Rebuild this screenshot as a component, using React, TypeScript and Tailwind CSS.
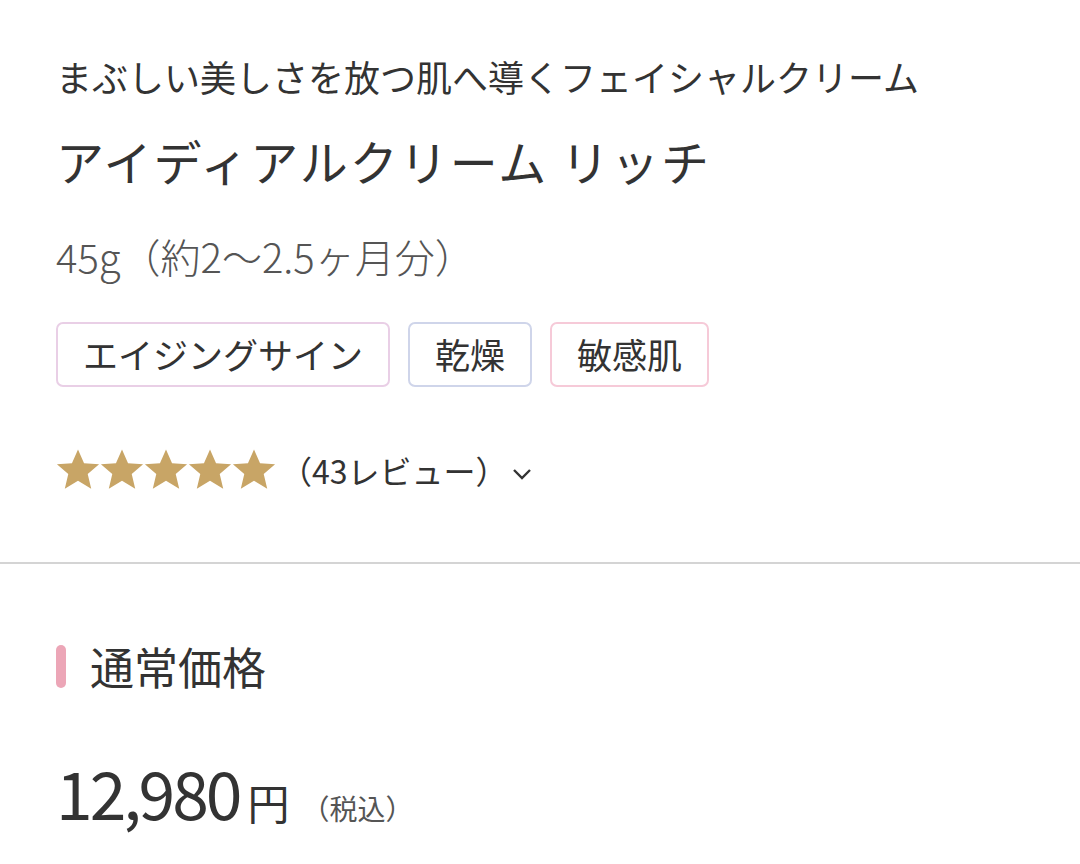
const FONT = { fontFamily: '"Noto Sans CJK JP", "Noto Sans", sans-serif' };

const tags = [
  { label: 'エイジングサイン', border: 'border-[#e9cfe6]' },
  { label: '乾燥', border: 'border-[#cfd5ea]' },
  { label: '敏感肌', border: 'border-[#f6cad8]' },
];

function Star() {
  return (
    <svg viewBox="0 0 24 24" className="w-[44px] h-[44px]">
      <path
        d="M12 .8l3.3 7.5 8.2.6-6.2 5.3 1.9 8L12 17.9l-7.2 4.3 1.9-8L.5 8.9l8.2-.6z"
        fill="#c8a566"
      />
    </svg>
  );
}

export default function App() {
  return (
    <div className="w-[1080px] min-h-[864px] bg-white text-[#333] overflow-hidden" style={FONT}>
      <div className="px-[56px] pt-[49px] pb-[70px]">
        <p className="text-[36px] leading-[54px]">まぶしい美しさを放つ肌へ導くフェイシャルクリーム</p>
        <h1 className="mt-[21px] text-[48px] leading-[72px] tracking-[2px]">アイディアルクリーム リッチ</h1>
        <p className="mt-[32px] text-[40px] leading-[56px] font-light text-[#555]">45g（約2〜2.5ヶ月分）</p>
        <div className="mt-[38px] flex gap-[18px]">
          {tags.map((t) => (
            <span
              key={t.label}
              className={`h-[65px] flex items-center px-[25px] border-2 rounded-[7px] text-[35px] ${t.border}`}
            >
              {t.label}
            </span>
          ))}
        </div>
        <div className="mt-[61px] flex items-center h-[44px]">
          <div className="flex">
            {[0, 1, 2, 3, 4].map((i) => (
              <Star key={i} />
            ))}
          </div>
          <span className="ml-[4px] text-[32px] leading-none">（43レビュー）</span>
          <svg viewBox="0 0 20 12" className="ml-[4px] mt-[8px] w-[20px] h-[12px]" fill="none" stroke="#333" strokeWidth="2.4">
            <path d="M2 2l8 8 8-8" />
          </svg>
        </div>
      </div>
      <div className="h-[2px] bg-[#d4d4d4]" />
      <div className="px-[56px] pt-[72px]">
        <div className="flex items-center h-[60px]">
          <div className="w-[10px] h-[43px] rounded-full bg-[#eca6b7]" />
          <h2 className="ml-[24px] text-[44px] leading-none">通常価格</h2>
        </div>
        <div className="mt-[62px] flex items-baseline">
          <span className="text-[66px] leading-none tracking-[-3px]">12,980</span>
          <span className="ml-[8px] text-[42px] leading-none">円</span>
          <span className="ml-[12px] text-[28px] leading-none text-[#555]">（税込）</span>
        </div>
      </div>
    </div>
  );
}
